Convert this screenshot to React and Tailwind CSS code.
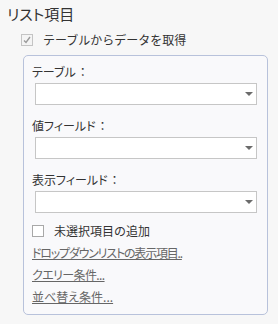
import React from "react";

const font = { fontFamily: '"Noto Sans CJK JP", "Noto Sans", sans-serif' };

function Select() {
  return (
    <div className="relative ml-[11px] w-[222px] h-[22px] bg-white border border-[#c6c6c6]">
      <svg className="absolute right-[3px] top-[8px]" width="8" height="4" viewBox="0 0 8 4">
        <polygon points="0,0 8,0 4,4" fill="#6b6b6b" />
      </svg>
    </div>
  );
}

function Label({ children }) {
  return (
    <div className="ml-[8px] h-[20px]">
      <span className="[font-feature-settings:'palt']">{children}</span>
      <span className="ml-[1px]">：</span>
    </div>
  );
}

export default function App() {
  return (
    <div className="w-[278px] h-[324px] bg-[#f7f7f7] text-[#333] overflow-hidden" style={font}>
      <div className="pl-[7px] pt-[4px] h-[24px] text-[15px] leading-[20px] [font-feature-settings:'palt']">リスト項目</div>
      <div className="flex items-center h-[20px] mt-[6px] pl-[21px]">
        <div className="relative w-[12px] h-[12px] border border-[#c4c4c4] bg-[#f4f4f4]">
          <svg className="absolute left-[1px] top-[1px]" width="8" height="8" viewBox="0 0 8 8">
            <polyline points="1,4.5 3,6.5 7,1" fill="none" stroke="#9a9a9a" strokeWidth="1.4" />
          </svg>
        </div>
        <span className="ml-[10px] text-[12px] leading-[20px]">テーブルからデータを取得</span>
      </div>
      <div className="ml-[23px] mt-[5px] w-[245px] h-[260px] border border-[#b8c2db] rounded-[5px] bg-[#f9f9fb] flex flex-col text-[12px] leading-[20px]">
        <div className="mt-[6px]"><Label>テーブル</Label></div>
        <div className="mt-[1px]"><Select /></div>
        <div className="mt-[11px]"><Label>値フィールド</Label></div>
        <div className="mt-[1px]"><Select /></div>
        <div className="mt-[11px]"><Label>表示フィールド</Label></div>
        <div className="mt-[1px]"><Select /></div>
        <div className="flex items-center mt-[8px] ml-[8px] h-[20px]">
          <div className="w-[12px] h-[12px] border border-[#a8a8a8] bg-white" />
          <span className="ml-[10px]">未選択項目の追加</span>
        </div>
        <div className="mt-[2px] ml-[8px] h-[20px] text-[#666] underline tracking-[-1.2px] [font-feature-settings:'palt']">ドロップダウンリストの表示項目..</div>
        <div className="mt-[2px] ml-[8px] h-[20px] text-[#666] underline tracking-[-0.6px] [font-feature-settings:'palt']">クエリー条件...</div>
        <div className="mt-[2px] ml-[8px] h-[20px] text-[#666] underline [font-feature-settings:'palt']">並べ替え条件...</div>
      </div>
    </div>
  );
}
